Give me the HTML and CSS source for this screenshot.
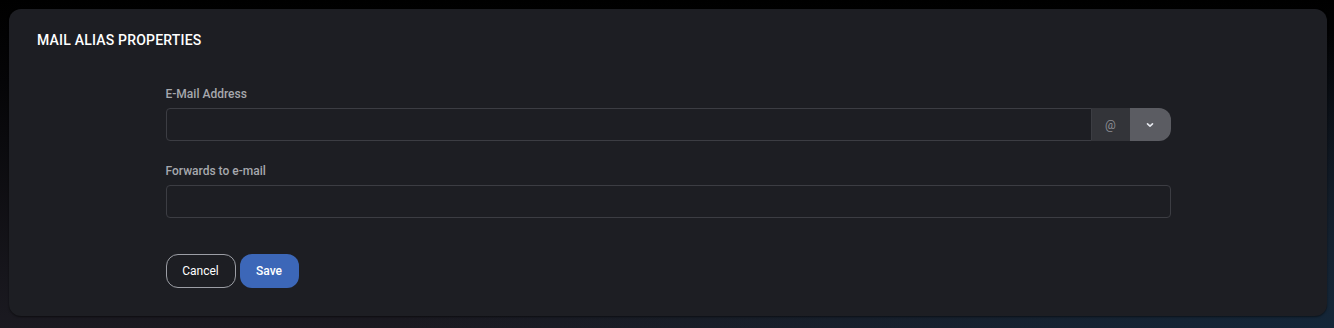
FILE: index.html
```html
<!DOCTYPE html>
<html lang="en">
<head>
    <meta charset="UTF-8">
    <title>Mail Alias Properties</title>
    <link rel="stylesheet" href="styles.css">
</head>
<body>
    <div class="card">
        <div class="card-title">Mail Alias Properties</div>

        <form class="form">
            <!-- Адрес -->
            <div class="field">
                <label class="label">E-Mail Address</label>
                <div class="input-group">
                    <input type="text" class="input">
                    <span class="addon">@</span>
                    <button type="button" class="addon-btn">
                        <svg width="10" height="10" viewBox="0 0 10 10"><path d="M2.5 3.8 L5 6.2 L7.5 3.8" fill="none" stroke="#e6e8ee" stroke-width="1.6" stroke-linecap="round" stroke-linejoin="round"/></svg>
                    </button>
                </div>
            </div>

            <!-- Пересылка -->
            <div class="field">
                <label class="label">Forwards to e-mail</label>
                <input type="text" class="input full">
            </div>

            <div class="actions">
                <button type="button" class="btn btn-outline">Cancel</button>
                <button type="button" class="btn btn-primary">Save</button>
            </div>
        </form>
    </div>
</body>
</html>
```

FILE: styles.css
```css
html, body {
    height: 100%;
}

body {
    margin: 0;
    padding: 9px 7px 12px 9px;
    box-sizing: border-box;
    font-family: Roboto, "Liberation Sans", sans-serif;
    background:
        radial-gradient(ellipse 70% 90% at 100% 100%, #142638 0%, rgba(20, 38, 56, 0) 100%),
        linear-gradient(to bottom, #000 0%, #050507 25%, #1b1a21 100%);
    color: #fff;
}

.card {
    height: 307px;
    box-sizing: border-box;
    background-color: #1d1e23;
    border-radius: 12px;
    box-shadow: 0 1px 2px rgba(0, 0, 0, 0.5);
    padding: 23px 28px 28px;
}

.card-title {
    font-size: 14px;
    line-height: 16px;
    font-weight: 500;
    letter-spacing: 0.2px;
    text-transform: uppercase;
    color: #fff;
}

.form {
    width: 1005px;
    margin: 38px auto 0;
}

.field {
    margin-bottom: 22px;
}

.label {
    display: block;
    font-size: 12px;
    line-height: 16px;
    font-weight: 500;
    color: #a6a8ad;
    margin-bottom: 6px;
}

.input-group {
    display: flex;
    height: 33px;
}

.input {
    flex: 1;
    height: 33px;
    box-sizing: border-box;
    background-color: #1d1e23;
    border: 1px solid #3c3d43;
    border-radius: 4px;
    outline: none;
    color: #fff;
    font-family: inherit;
    font-size: 13px;
    padding: 0 10px;
}

.input-group .input {
    border-radius: 4px 0 0 4px;
}

.input.full {
    display: block;
    width: 100%;
}

.addon {
    width: 38px;
    display: flex;
    align-items: center;
    justify-content: center;
    background-color: #333439;
    color: #8c8d93;
    font-size: 12px;
}

.addon-btn {
    width: 41px;
    border: none;
    padding: 0;
    background-color: #5b5c62;
    border-radius: 0 12px 12px 0;
    display: flex;
    align-items: center;
    justify-content: center;
    cursor: pointer;
}

.actions {
    display: flex;
    gap: 4px;
    margin-top: 36px;
}

.btn {
    height: 34px;
    box-sizing: border-box;
    border-radius: 12px;
    font-family: inherit;
    font-size: 12px;
    font-weight: 400;
    cursor: pointer;
}

.btn-outline {
    width: 70px;
    background: transparent;
    border: 1px solid #9c9ea5;
    color: #fff;
}

.btn-primary {
    width: 59px;
    background-color: #3c67b8;
    border: none;
    color: #fff;
    font-weight: 500;
}

.btn-primary:hover {
    background-color: #4572c4;
}
```
